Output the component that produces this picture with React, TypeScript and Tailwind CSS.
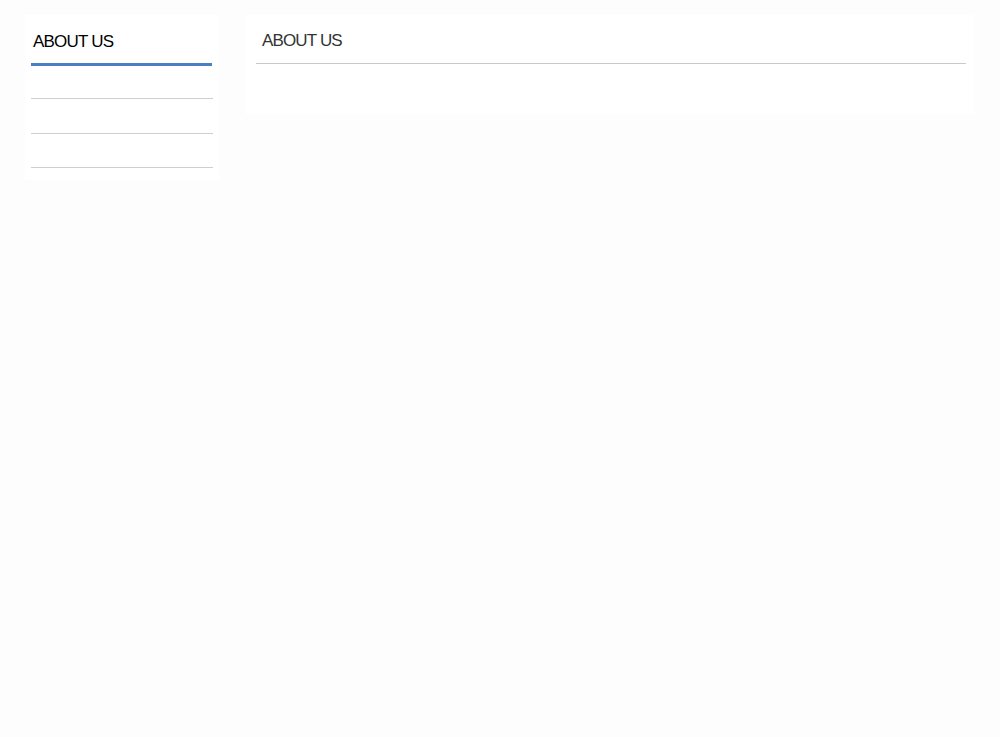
import React from 'react';

const App: React.FC = () => {
  return (
    <div className="min-h-[737px] w-full bg-[#fdfdfd] font-['Liberation_Sans',Arial,sans-serif]">
      <div className="flex items-start pt-[15px] pl-[25px] pr-[26px]">
        {/* sidebar */}
        <aside className="w-[194px] bg-white px-[6px] pb-[12px]">
          <div className="mr-[1px] h-[51px] border-b-[3px] border-[#4a7fc4] pt-[17px] pl-[2px]">
            <h2 className="text-[17px] leading-[20px] tracking-[-0.8px] text-black">ABOUT US</h2>
          </div>
          <ul>
            <li className="h-[33px] border-b border-[#cfcfcf]" />
            <li className="h-[35px] border-b border-[#cfcfcf]" />
            <li className="h-[34px] border-b border-[#cfcfcf]" />
          </ul>
        </aside>

        {/* main */}
        <main className="ml-[26px] flex-1 bg-white pl-[11px] pr-[8px] pb-[50px]">
          <div className="h-[49px] border-b border-[#c8c8c8] pt-[16px] pl-[6px]">
            <h1 className="text-[17px] leading-[20px] tracking-[-0.85px] text-[#333]">ABOUT US</h1>
          </div>
        </main>
      </div>
    </div>
  );
};

export default App;
